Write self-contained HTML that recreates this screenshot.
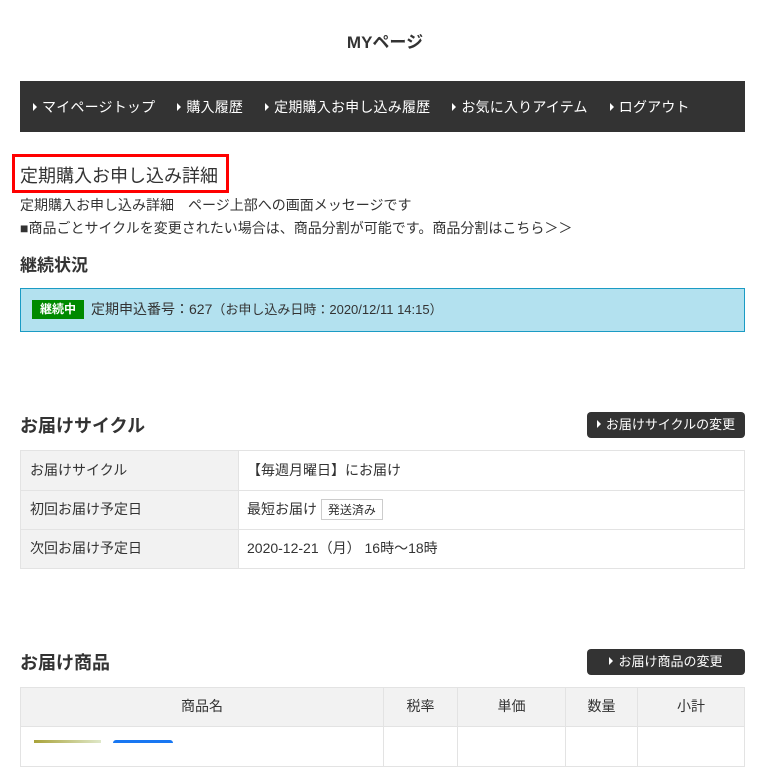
<!DOCTYPE html>
<html><head><meta charset="utf-8"><style>
*{margin:0;padding:0;box-sizing:border-box}
body{width:770px;height:743px;overflow:hidden;background:#fff;font-family:"Liberation Sans","Noto Sans CJK JP",sans-serif;color:#333;font-size:14px;position:relative}
.a{position:absolute}
.nav{left:20px;top:81px;width:725px;height:51px;background:#333;color:#fff;font-size:14px;display:flex;align-items:center;padding-left:13px;letter-spacing:0.2px}
.nav span{margin-right:22px}
.tri{display:inline-block;width:0;height:0;border-left:4px solid #fff;border-top:4px solid transparent;border-bottom:4px solid transparent;margin-right:5px;vertical-align:1px}
.btn{background:#333;color:#fff;border-radius:4px;font-size:13px;height:26px;line-height:26px;text-align:center}
table{border-collapse:collapse;position:absolute;left:20px;width:725px}
td,th{border:1px solid #e3e3e3;font-weight:normal;font-size:14px;vertical-align:middle}
h2{font-size:18px;font-weight:bold;position:absolute;left:20px}
</style></head><body>
<div class="a" style="left:0;width:770px;top:28px;text-align:center;font-size:17px;font-weight:bold">MYページ</div>
<div class="a nav"><span><i class="tri"></i>マイページトップ</span><span><i class="tri"></i>購入履歴</span><span><i class="tri"></i>定期購入お申し込み履歴</span><span><i class="tri"></i>お気に入りアイテム</span><span><i class="tri"></i>ログアウト</span></div>
<div class="a" style="left:12px;top:154px;width:217px;height:39px;border:3px solid #f00;font-size:18px;padding:5px 0 0 5px;white-space:nowrap">定期購入お申し込み詳細</div>
<div class="a" style="left:20px;top:194px;line-height:23px">定期購入お申し込み詳細　ページ上部への画面メッセージです<br>■商品ごとサイクルを変更されたい場合は、商品分割が可能です。商品分割はこちら＞＞</div>
<h2 style="top:251px;font-size:17px">継続状況</h2>
<div class="a" style="left:20px;top:288px;width:725px;height:44px;background:#b3e1ef;border:1px solid #1a9bc4"></div>
<div class="a" style="left:32px;top:300px;width:52px;height:19px;background:#008a00;color:#fff;font-size:12px;font-weight:bold;text-align:center;line-height:19px">継続中</div>
<div class="a" style="left:91px;top:299px;font-size:14px">定期申込番号：627<span style="font-size:13px">（お申し込み日時：2020/12/11 14:15）</span></div>
<h2 style="top:412px">お届けサイクル</h2>
<div class="a btn" style="left:587px;top:412px;width:158px"><i class="tri"></i>お届けサイクルの変更</div>
<table style="top:450px">
<tr style="height:40px"><td style="width:218px;background:#f2f2f2;padding-left:9px;padding-bottom:2px">お届けサイクル</td><td style="padding-left:8px;padding-bottom:2px">【毎週月曜日】にお届け</td></tr>
<tr style="height:39px"><td style="background:#f2f2f2;padding-left:9px;padding-bottom:2px">初回お届け予定日</td><td style="padding-left:8px;padding-bottom:1px">最短お届け <span style="display:inline-block;border:1px solid #ccc;font-size:12px;padding:1px 6px;margin-left:0;vertical-align:middle">発送済み</span></td></tr>
<tr style="height:39px"><td style="background:#f2f2f2;padding-left:9px;padding-bottom:2px">次回お届け予定日</td><td style="padding-left:8px;padding-bottom:2px">2020-12-21（月） 16時～18時</td></tr>
</table>
<h2 style="top:649px">お届け商品</h2>
<div class="a btn" style="left:587px;top:649px;width:158px"><i class="tri"></i>お届け商品の変更</div>
<table style="top:687px">
<tr style="height:39px;background:#f2f2f2;text-align:center"><th style="width:363px;padding-bottom:2px">商品名</th><th style="width:74px;padding-bottom:2px">税率</th><th style="width:108px;padding-bottom:2px">単価</th><th style="width:72px;padding-bottom:2px">数量</th><th style="padding-bottom:2px">小計</th></tr>
<tr style="height:40px"><td></td><td></td><td></td><td></td><td></td></tr>
</table>
<div class="a" style="left:34px;top:740px;width:67px;height:3px;background:linear-gradient(90deg,#a9a33a,#dfe8c9)"></div>
<div class="a" style="left:113px;top:740px;width:60px;height:3px;background:#1877f2;border-radius:3px 3px 0 0"></div>
</body></html>
